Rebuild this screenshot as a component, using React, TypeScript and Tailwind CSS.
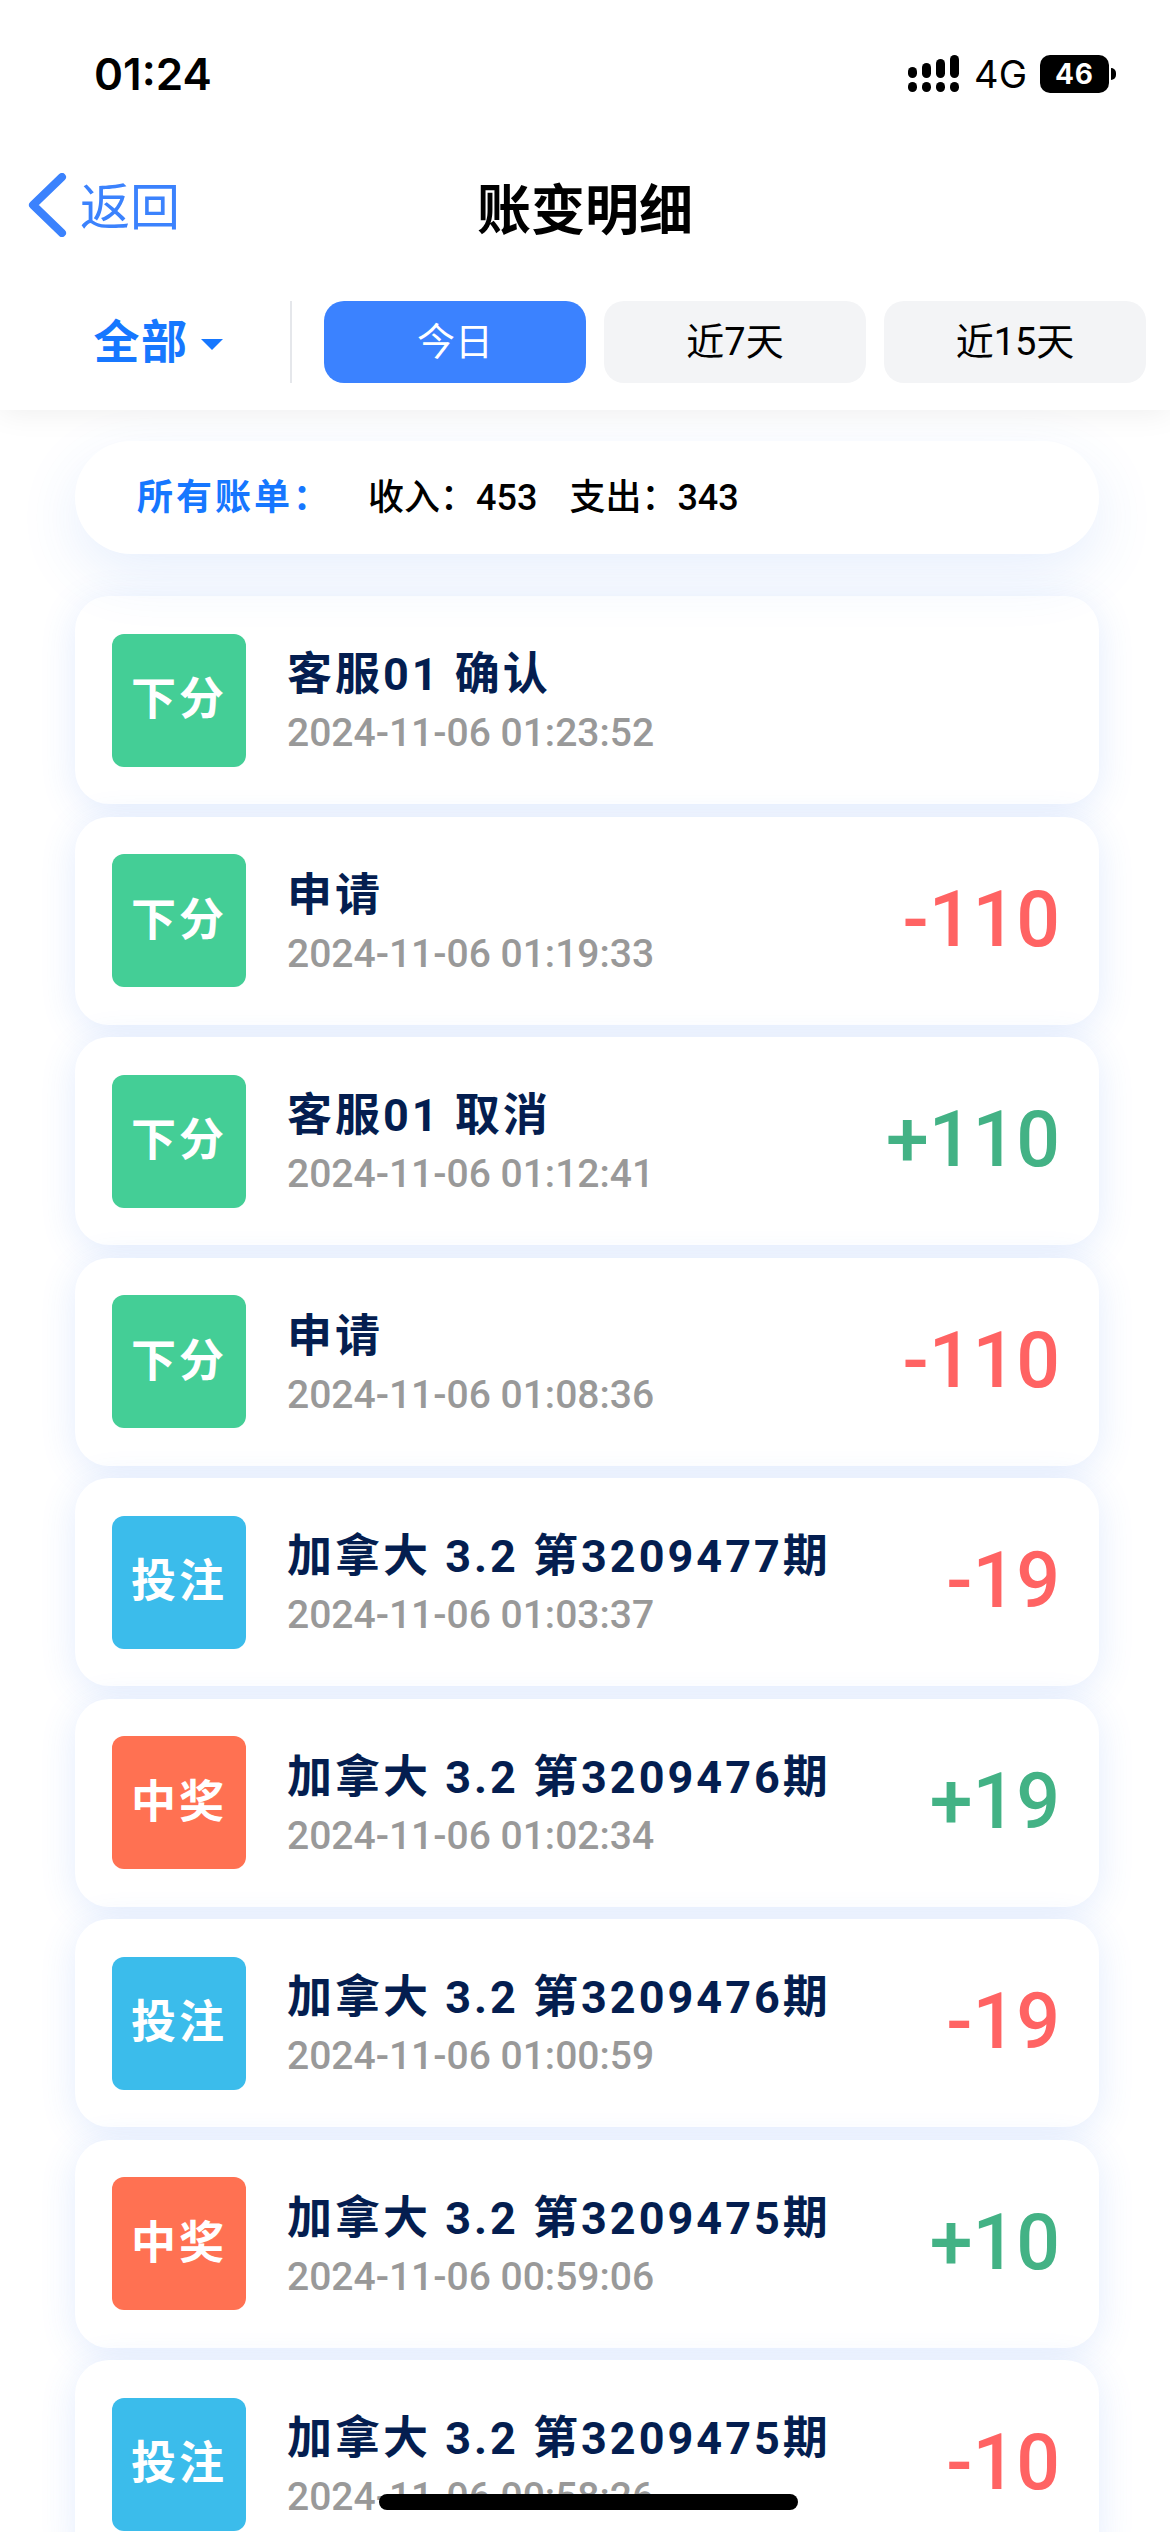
const cjk = "font-['Roboto','Noto_Sans_CJK_SC',sans-serif]";

type Row = {
  kind: '下分' | '投注' | '中奖';
  title: string;
  time: string;
  amount?: string;
};

const rows: Row[] = [
  { kind: '下分', title: '客服01 确认', time: '2024-11-06 01:23:52' },
  { kind: '下分', title: '申请', time: '2024-11-06 01:19:33', amount: '-110' },
  { kind: '下分', title: '客服01 取消', time: '2024-11-06 01:12:41', amount: '+110' },
  { kind: '下分', title: '申请', time: '2024-11-06 01:08:36', amount: '-110' },
  { kind: '投注', title: '加拿大 3.2 第3209477期', time: '2024-11-06 01:03:37', amount: '-19' },
  { kind: '中奖', title: '加拿大 3.2 第3209476期', time: '2024-11-06 01:02:34', amount: '+19' },
  { kind: '投注', title: '加拿大 3.2 第3209476期', time: '2024-11-06 01:00:59', amount: '-19' },
  { kind: '中奖', title: '加拿大 3.2 第3209475期', time: '2024-11-06 00:59:06', amount: '+10' },
  { kind: '投注', title: '加拿大 3.2 第3209475期', time: '2024-11-06 00:58:26', amount: '-10' },
];

const badgeColor = {
  下分: 'bg-[#44ce96]',
  投注: 'bg-[#3bbceb]',
  中奖: 'bg-[#ff7152]',
};

function SignalIcon() {
  return (
    <svg width="52" height="38" viewBox="0 0 52 38" fill="#000">
      <rect x="0" y="12" width="9" height="11" rx="4.5" />
      <rect x="14" y="8" width="9" height="15" rx="4.5" />
      <rect x="28" y="4" width="9" height="19" rx="4.5" />
      <rect x="42" y="0" width="9" height="23" rx="4.5" />
      <rect x="0" y="27" width="9" height="10" rx="4.5" />
      <rect x="14" y="27" width="9" height="10" rx="4.5" />
      <rect x="28" y="27" width="9" height="10" rx="4.5" />
      <rect x="42" y="27" width="9" height="10" rx="4.5" />
    </svg>
  );
}

function StatusBar() {
  return (
    <div className="flex items-center justify-between h-[148px] pl-[94px] pr-[54px]">
      <span className="font-['Inter',sans-serif] text-[44px] font-semibold text-black">01:24</span>
      <div className="flex items-center">
        <SignalIcon />
        <span className="ml-[14px] font-['Inter',sans-serif] text-[38px] text-black">4G</span>
        <div className="ml-[13px] flex items-center justify-center w-[69px] h-[38px] rounded-[10px] bg-black font-['Inter',sans-serif] text-[28px] font-bold tracking-[1px] text-white">
          46
        </div>
        <div className="ml-[2px] w-[5px] h-[12px] rounded-r-full bg-black" />
      </div>
    </div>
  );
}

function Header() {
  return (
    <div className={`relative z-20 h-[410px] bg-white shadow-[0_2px_30px_rgba(0,0,0,0.07)] ${cjk}`}>
      <StatusBar />
      <div className="relative flex items-center justify-center h-[100px] mt-[10px]">
        <button className="absolute left-[28px] top-[15px] flex items-center text-[#3b82fd]">
          <svg width="40" height="64" viewBox="0 0 40 64" fill="none" stroke="currentColor" strokeWidth="8" strokeLinecap="round" strokeLinejoin="round">
            <path d="M34 4 L5 32 L34 60" />
          </svg>
          <span className="ml-[12px] mt-[6px] text-[50px] leading-none">返回</span>
        </button>
        <h1 className="mt-[6px] text-[54px] font-bold text-black">账变明细</h1>
      </div>
      <div className="flex items-center mt-[43px] h-[82px]">
        <button className="flex items-center justify-center w-[290px] pl-[26px] text-[#1677ff]">
          <span className="text-[46px] font-bold tracking-[1.5px]">全部</span>
          <span className="ml-[12px] mt-[4px] border-x-[11px] border-t-[11px] border-x-transparent border-t-[#1677ff]" />
        </button>
        <div className="w-[2px] h-[82px] bg-[#e5e7eb]" />
        <div className="flex ml-[32px] gap-[18px]">
          <button className="w-[262px] h-[82px] rounded-[20px] bg-[#3b82ff] text-[38px] text-white">今日</button>
          <button className="w-[262px] h-[82px] rounded-[20px] bg-[#f3f4f6] text-[38px] text-black">近7天</button>
          <button className="w-[262px] h-[82px] rounded-[20px] bg-[#f3f4f6] text-[38px] text-black">近15天</button>
        </div>
      </div>
    </div>
  );
}

function BillRow({ row }: { row: Row }) {
  const income = row.amount?.startsWith('+');
  return (
    <div className="flex items-center h-[208px] pl-[37px] pr-[39px] rounded-[34px] bg-white shadow-[0_6px_36px_rgba(60,120,240,0.14)]">
      <div className={`flex items-center justify-center shrink-0 w-[134px] h-[133px] rounded-[12px] text-[45px] font-bold tracking-[3px] text-white ${badgeColor[row.kind]}`}>
        {row.kind}
      </div>
      <div className="flex-1 ml-[41px] mt-[6px] min-w-0">
        <div className="text-[45px] leading-[60px] font-bold tracking-[3px] text-[#041e50] whitespace-nowrap">{row.title}</div>
        <div className="text-[39px] leading-[56px] font-medium text-[#999999] whitespace-nowrap">{row.time}</div>
      </div>
      {row.amount && (
        <div className={`text-[77px] font-medium ${income ? 'text-[#43b285]' : 'text-[#ff6363]'}`}>{row.amount}</div>
      )}
    </div>
  );
}

export default function App() {
  return (
    <div className={`relative h-[2532px] overflow-hidden bg-white ${cjk}`}>
      <Header />
      <div className="pl-[75px] pr-[71px] pt-[31px]">
        <div className="relative z-10 flex items-center h-[113px] pl-[62px] rounded-[56px] bg-white shadow-[0_20px_60px_rgba(60,120,240,0.12)]">
          <span className="text-[36px] font-bold tracking-[3px] text-[#1677ff]">所有账单：</span>
          <span className="ml-[36px] text-[36px] font-medium text-black">收入：453</span>
          <span className="ml-[32px] text-[36px] font-medium text-black">支出：343</span>
        </div>
        <div className="flex flex-col gap-[12.5px] mt-[42px]">
          {rows.map((row) => (
            <BillRow key={row.title + row.time} row={row} />
          ))}
        </div>
      </div>
      {/* home indicator */}
      <div className="absolute left-[379px] bottom-[22px] w-[419px] h-[16px] rounded-full bg-black" />
    </div>
  );
}
